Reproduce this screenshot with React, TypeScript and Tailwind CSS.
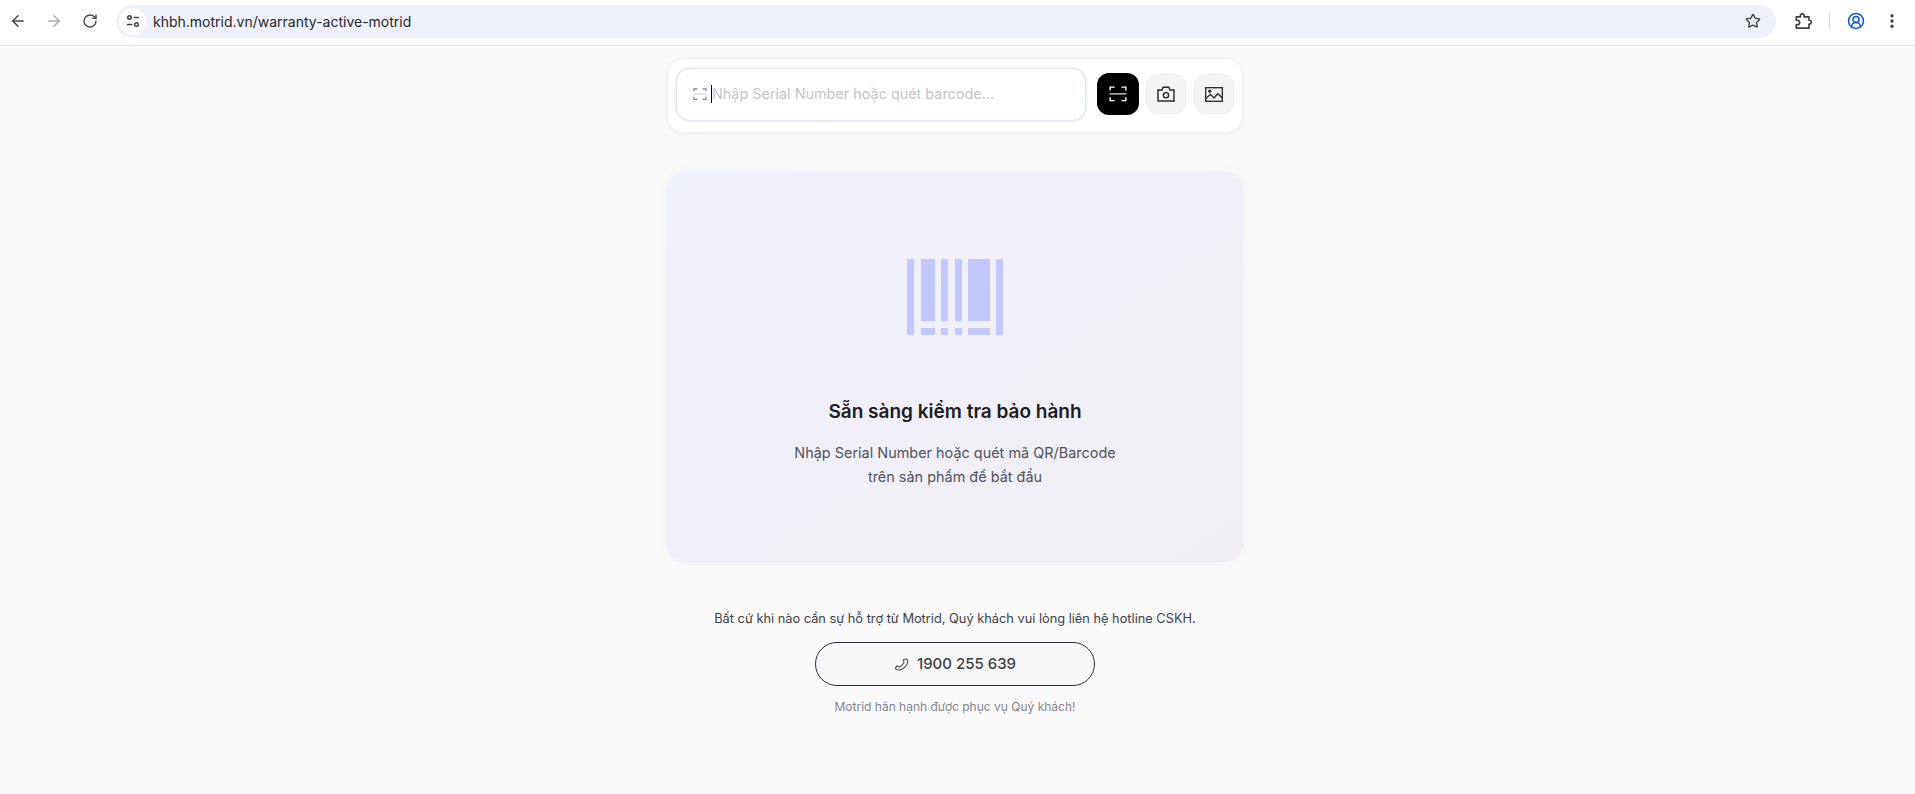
import { ArrowLeft, ArrowRight, RotateCw, Star, CircleUserRound, EllipsisVertical } from "lucide-react";

function TuneIcon() {
  return (
    <svg width="16" height="16" viewBox="0 0 16 16" fill="none" stroke="#3c4043" strokeWidth="1.4">
      <circle cx="4.5" cy="4.5" r="1.8" />
      <path d="M8.5 4.5H14" />
      <path d="M2 11.5H7.5" />
      <circle cx="11.5" cy="11.5" r="1.8" />
    </svg>
  );
}

function ExtensionIcon() {
  return (
    <svg width="18" height="18" viewBox="0 0 24 24" fill="none" stroke="#3c4043" strokeWidth="2.2" strokeLinejoin="round">
      <path d="M3 6.5h5.5V5a2.5 2.5 0 0 1 5 0v1.5H20V11h.5a2.5 2.5 0 0 1 0 5H20v5.5H3V17h1.5a3 3 0 0 0 0-6H3z" />
    </svg>
  );
}

function ScanIcon({ size, color, lineColor }: { size: number; color: string; lineColor: string }) {
  return (
    <svg width={size} height={size * 0.875} viewBox="0 0 16 14" fill="none" stroke={color} strokeWidth="1.2">
      <path d="M1 4V1H5" />
      <path d="M11 1H15V4" />
      <path d="M1 10V13H5" />
      <path d="M11 13H15V10" />
      <path d="M0.5 7H15.5" stroke={lineColor} />
    </svg>
  );
}

function CameraIcon() {
  return (
    <svg width="18" height="16" viewBox="0 0 18 16" fill="none" stroke="#27272a" strokeWidth="1.4">
      <path d="M1 4H5L6.2 1.2H11.8L13 4H17V15H1Z" />
      <circle cx="9" cy="9.2" r="2.6" />
    </svg>
  );
}

function ImageIcon() {
  return (
    <svg width="18" height="15" viewBox="0 0 18 15" fill="none" stroke="#27272a" strokeWidth="1.3">
      <rect x="0.7" y="0.7" width="16.6" height="13.6" />
      <circle cx="4.8" cy="4.2" r="1" fill="#27272a" />
      <path d="M0.7 11.5L5.5 7.5L9 11L12.8 6.8L17.3 11" />
    </svg>
  );
}

function HandsetIcon() {
  return (
    <svg width="15" height="13" viewBox="0 0 15 13" fill="none" stroke="#52525b" strokeWidth="1.1" strokeLinejoin="round">
      <path d="M9.5 1.5L12.5 1C13.8 2 14 4 13 6C11.6 9.2 8 12 4.5 12C2.8 12 1.6 11.4 1.2 10.2L3 7.8L5.4 9C7.4 8 9 6.4 10 4.4Z" />
    </svg>
  );
}

function BarcodeIcon() {
  return (
    <svg width="96" height="76" viewBox="0 0 96 76" fill="#c3c7fb">
      <rect x="0" y="0" width="7" height="76" />
      <rect x="89" y="0" width="7" height="76" />
      <rect x="14" y="0" width="14" height="62" />
      <rect x="34" y="0" width="7" height="62" />
      <rect x="48" y="0" width="7" height="62" />
      <rect x="61" y="0" width="22" height="62" />
      <rect x="14" y="69" width="14" height="7" />
      <rect x="34" y="69" width="7" height="7" />
      <rect x="48" y="69" width="7" height="7" />
      <rect x="61" y="69" width="22" height="7" />
    </svg>
  );
}

export default function App() {
  return (
    <div className="h-[794px] bg-[#fafafa] font-['Inter',sans-serif] overflow-hidden">
      {/* Browser bar */}
      <div className="h-[46px] bg-white border-b border-[#e3e3e3] flex items-center pl-[9px] pb-[3px]">
        <ArrowLeft className="w-[18px] h-[18px] text-[#44474a]" strokeWidth={2} />
        <ArrowRight className="w-[18px] h-[18px] text-[#a8abae] ml-[18px]" strokeWidth={2} />
        <RotateCw className="w-[16px] h-[16px] text-[#44474a] ml-[19px]" strokeWidth={2} />
        <div className="ml-[18px] h-[33px] w-[1660px] rounded-full bg-[#eef1f9] flex items-center pl-[3px] pr-[15px]">
          <div className="w-[27px] h-[27px] rounded-full bg-white flex items-center justify-center">
            <TuneIcon />
          </div>
          <span className="ml-[7px] text-[14px] text-[#26282b]">khbh.motrid.vn/warranty-active-motrid</span>
          <Star className="w-[16px] h-[16px] text-[#3c4043] ml-auto" strokeWidth={2} />
        </div>
        <div className="ml-[18px]">
          <ExtensionIcon />
        </div>
        <div className="w-px h-[16px] bg-[#d5d9dd] ml-[17px]" />
        <CircleUserRound className="w-[18px] h-[18px] text-[#0b57d0] ml-[17px]" strokeWidth={2} />
        <EllipsisVertical className="w-[18px] h-[18px] text-[#3c4043] ml-[18px]" strokeWidth={2.5} />
      </div>

      <div className="w-[576px] pt-[12px] ml-[667px]">
        {/* Search box */}
        <div className="h-[75px] bg-white rounded-[16px] border border-[#eff0f2] shadow-[0_1px_4px_rgba(0,0,0,0.06)] flex items-center pl-[8px] pb-[3px]">
          <div className="w-[410px] h-[53px] bg-white rounded-[14px] border border-[#dfe7f0] shadow-[0_0_3px_rgba(100,130,170,0.3)] flex items-center pl-[16px] text-[14.4px] text-[#c4c4c8]">
            <ScanIcon size={14} color="#7b7fa8" lineColor="#c9cbdc" />
            <div className="w-px h-[18px] bg-black ml-[4px]" />
            <span>Nhập Serial Number hoặc quét barcode...</span>
          </div>
          <div className="ml-[11px] w-[42px] h-[42px] rounded-[12px] bg-black flex items-center justify-center">
            <ScanIcon size={18} color="#ffffff" lineColor="#d4d4d4" />
          </div>
          <div className="ml-[7px] w-[40px] h-[40px] rounded-[12px] bg-[#f4f4f4] border border-[#ececec] flex items-center justify-center">
            <CameraIcon />
          </div>
          <div className="ml-[8px] w-[40px] h-[40px] rounded-[12px] bg-[#f4f4f4] border border-[#ececec] flex items-center justify-center">
            <ImageIcon />
          </div>
        </div>

        {/* Empty state */}
        <div className="mt-[39px] h-[390px] rounded-[18px] bg-gradient-to-br from-[#eff1fc] to-[#f1eef3] shadow-[0_0_8px_rgba(120,120,200,0.08)] flex flex-col items-center pt-[87px]">
          <BarcodeIcon />
          <h2 className="mt-[63px] text-[19px] leading-[28px] font-semibold text-[#1c1c22]">Sẵn sàng kiểm tra bảo hành</h2>
          <p className="mt-[15px] text-[14.45px] leading-[24px] text-[#52525b] text-center">
            Nhập Serial Number hoặc quét mã QR/Barcode
            <br />
            trên sản phẩm để bắt đầu
          </p>
        </div>

        {/* Support */}
        <div className="mt-[47px] flex flex-col items-center">
          <p className="text-[12.8px] leading-[20px] text-[#3f3f46]">Bất cứ khi nào cần sự hỗ trợ từ Motrid, Quý khách vui lòng liên hệ hotline CSKH.</p>
          <div className="mt-[13px] w-[280px] h-[44px] rounded-full border border-[#2f2f3a] bg-[#f7f7f8] flex items-center justify-center gap-[8px]">
            <HandsetIcon />
            <span className="text-[15px] font-medium text-[#3f3f46]">1900 255 639</span>
          </div>
          <p className="mt-[12px] text-[12px] leading-[18px] text-[#85858c]">Motrid hân hạnh được phục vụ Quý khách!</p>
        </div>
      </div>
    </div>
  );
}
